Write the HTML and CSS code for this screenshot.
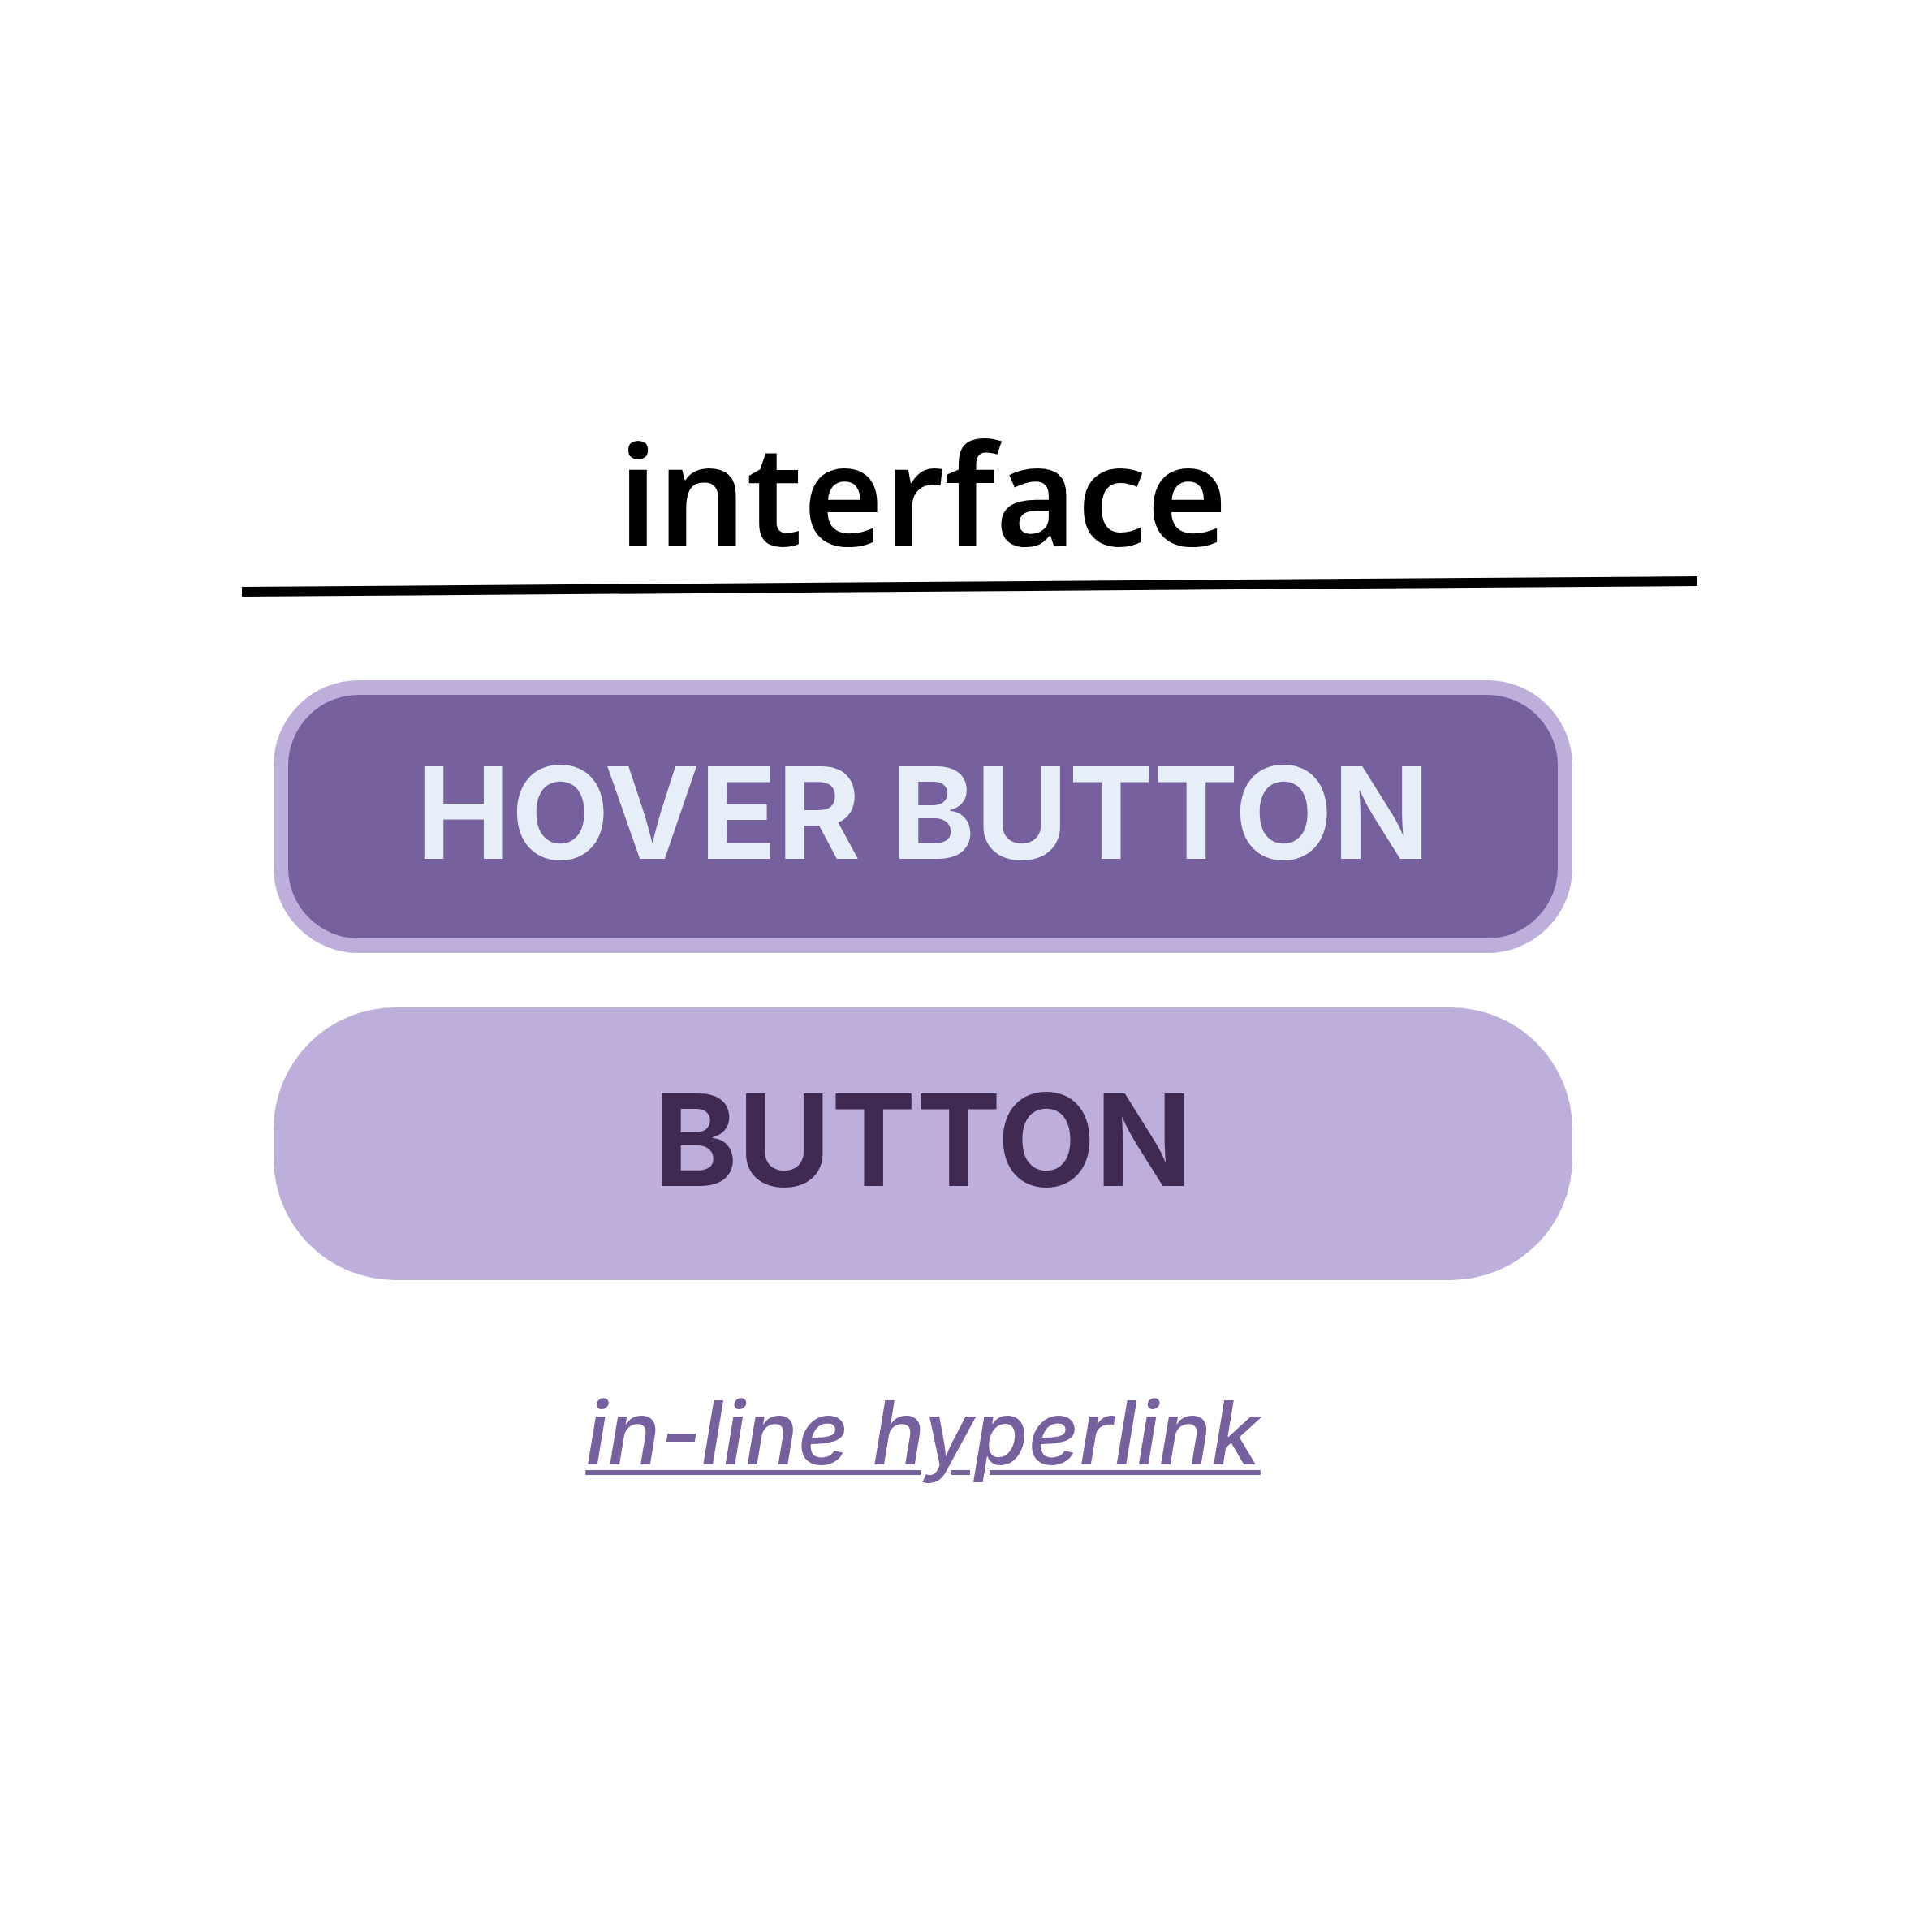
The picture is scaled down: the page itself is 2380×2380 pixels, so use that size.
FILE: index.html
```html
<!DOCTYPE html>
<html lang="en">
<head>
<meta charset="utf-8">
<meta name="viewport" content="width=device-width, initial-scale=1">
<title>interface</title>
<link rel="stylesheet" href="styles.css">
</head>
<body>
<main class="board">
  <h1 class="title">interface</h1>
  <svg class="rule" viewBox="0 0 1793 30" preserveAspectRatio="none" aria-hidden="true">
    <polygon points="0,17 1793,4 1793,16 0,29"/>
  </svg>
  <div class="samples">
    <button class="button button-hover" type="button">HOVER BUTTON</button>
    <button class="button" type="button">BUTTON</button>
  </div>
  <p class="inline"><a class="link" href="#">in-line hyperlink</a></p>
</main>
</body>
</html>
```

FILE: styles.css
```css
* {
  box-sizing: border-box;
}

body {
  margin: 0;
  background: #fff;
  color: #000;
  font-family: Inter, sans-serif;
}

.board {
  display: flex;
  flex-direction: column;
  padding: 506px 289px 200px 298px;
}

.title,
.samples,
.inline {
  margin: 0 154px 0 39px;
}

.title {
  font-family: "Noto Sans", sans-serif;
  font-size: 171px;
  font-weight: 600;
  line-height: 200px;
  text-align: center;
}

.rule {
  display: block;
  width: 100%;
  height: 30px;
}

.samples {
  display: flex;
  flex-direction: column;
  gap: 67px;
  padding: 102px 0 128px;
}

.button {
  width: 100%;
  padding: 63px 0 73px;
  border: 0;
  border-radius: 150px;
  background: #beaedb;
  color: #402a52;
  font-family: inherit;
  font-size: 157px;
  font-weight: 700;
  line-height: 200px;
  text-align: center;
}

.button-hover {
  padding: 45px 0 55px;
  border: 18px solid #beaedb;
  border-radius: 105px;
  background: #76609d;
  color: #e6eef8;
}

.inline {
  font-size: 108px;
  font-style: italic;
  font-weight: 500;
  line-height: 120px;
  text-align: center;
}

.link {
  color: #76609d;
  text-decoration: underline;
  text-decoration-thickness: 6px;
  text-underline-offset: 7px;
}
```
